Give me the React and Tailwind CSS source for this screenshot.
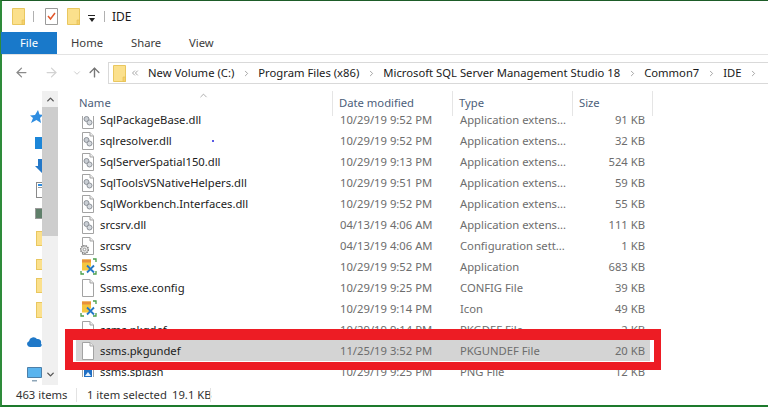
import React from 'react';
import { ArrowLeft, ArrowRight, ArrowUp, ChevronDown, ChevronRight, ChevronUp, ChevronsLeft } from 'lucide-react';

const files = [
    { name: "SqlPackageBase.dll", date: "10/29/19 9:52 PM", type: "Application extens...", size: "91 KB", icon: "dll" },
    { name: "sqlresolver.dll", date: "10/29/19 9:52 PM", type: "Application extens...", size: "32 KB", icon: "dll" },
    { name: "SqlServerSpatial150.dll", date: "10/29/19 9:13 PM", type: "Application extens...", size: "524 KB", icon: "dll" },
    { name: "SqlToolsVSNativeHelpers.dll", date: "10/29/19 9:51 PM", type: "Application extens...", size: "59 KB", icon: "dll" },
    { name: "SqlWorkbench.Interfaces.dll", date: "10/29/19 9:52 PM", type: "Application extens...", size: "55 KB", icon: "dll" },
    { name: "srcsrv.dll", date: "04/13/19 4:06 AM", type: "Application extens...", size: "111 KB", icon: "dll" },
    { name: "srcsrv", date: "04/13/19 4:06 AM", type: "Configuration sett...", size: "1 KB", icon: "config" },
    { name: "Ssms", date: "10/29/19 9:52 PM", type: "Application", size: "683 KB", icon: "app" },
    { name: "Ssms.exe.config", date: "10/29/19 9:25 PM", type: "CONFIG File", size: "39 KB", icon: "page" },
    { name: "ssms", date: "10/29/19 9:14 PM", type: "Icon", size: "49 KB", icon: "app" },
    { name: "ssms.pkgdef", date: "10/29/19 9:14 PM", type: "PKGDEF File", size: "2 KB", icon: "page" },
    { name: "ssms.pkgundef", date: "11/25/19 3:52 PM", type: "PKGUNDEF File", size: "20 KB", icon: "page", selected: true },
    { name: "ssms.splash", date: "10/29/19 9:25 PM", type: "PNG File", size: "12 KB", icon: "png" },
];

function Folder({ className }) {
    return (
        <svg className={className} viewBox="0 0 13 17">
            <path d="M.5.5h12v16H.5z" fill="#fbe08c" stroke="#e9c75f" />
            <path d="M10 12h2.500v4.500H10z" fill="#f6d16b" stroke="#e3bd52" strokeWidth=".6" />
        </svg>
    );
}

function Page({ children }) {
    return (
        <svg width="16" height="18" viewBox="0 0 16 18" className="shrink-0">
            <path d="M2.500.5h7.500l3.500 3.500v13.500h-11z" fill="#fff" stroke="#a3a3a3" />
            <path d="M10 .5v3.500h3.500" fill="#eee" stroke="#a3a3a3" />
            {children}
        </svg>
    );
}

function FileIcon({ kind }) {
    if (kind === "dll") {
        return (
            <Page>
                <circle cx="6.500" cy="8" r="2.500" fill="#c9ced4" stroke="#8d9299" />
                <circle cx="9.500" cy="11.500" r="2.500" fill="#d5d9de" stroke="#8d9299" />
            </Page>
        );
    }
    if (kind === "config") {
        return (
            <Page>
                <circle cx="4.500" cy="12.500" r="3.800" fill="#e5e5e5" stroke="#7d7d7d" strokeWidth="1.500" strokeDasharray="1.500 .8" />
                <circle cx="4.500" cy="12.500" r="1.300" fill="#fff" stroke="#7d7d7d" strokeWidth=".7" />
            </Page>
        );
    }
    if (kind === "app") {
        return (
            <svg width="17" height="17" viewBox="0 0 17 17" className="shrink-0">
                <path d="M2 1.500h9v6l-2 5H2z" fill="#f5c63f" />
                <path d="M2 1.500h9v3H2z" fill="#e8913a" />
                <path d="M13 1h3v3M1 13v3h3M13 16h3v-3" fill="none" stroke="#4a9e4a" strokeWidth="1.300" />
                <path d="M7 7.500l7 7M14 7.500l-7 7" stroke="#2478c8" strokeWidth="1.800" />
            </svg>
        );
    }
    if (kind === "png") {
        return (
            <Page>
                <path d="M4 6h8v8H4z" fill="#1f6fc4" />
                <path d="M5 13l3-4 3 4z" fill="#e6f1fb" />
            </Page>
        );
    }
    return <Page />;
}

function ColumnHeader({ width, children }) {
    return (
        <div style={{ width }} className="shrink-0 h-[25px] pl-[6px] border-r border-[#e5e5e5] text-[#4c607a] leading-[24px]">
            {children}
        </div>
    );
}

function FileRow({ file }) {
    return (
        <div className={`flex items-center h-[21px] ml-[18px] w-[574px] ${file.selected ? "bg-[#d4d4d4]" : ""}`}>
            <div className="w-[260px] shrink-0 flex items-center gap-[4px] pl-[4px] text-[#1c1c1c]">
                <div className="w-[16px] shrink-0 flex justify-center">
                    <FileIcon kind={file.icon} />
                </div>
                <span>{file.name}</span>
            </div>
            <div className="w-[120px] shrink-0 pl-[4px] text-[#6d6d6d]">{file.date}</div>
            <div className="w-[120px] shrink-0 pl-[4px] text-[#6d6d6d]">{file.type}</div>
            <div className="w-[69px] shrink-0 text-right text-[#6d6d6d]">{file.size}</div>
        </div>
    );
}

function NavFolder({ className }) {
    return <div className={`w-[6px] shrink-0 bg-[#fbe08c] border border-r-0 border-[#e9c75f] ${className}`} />;
}

function NavPane() {
    return (
        <div className="w-[40px] h-full shrink-0 overflow-hidden flex flex-col items-end">
            <svg className="mt-[19px] shrink-0 -mr-[1px]" width="13" height="14" viewBox="0 0 13 14">
                <path d="M8 0l1.500 4.500 3.500.5-3 3 1 5-4.500-3L1 13l2-5L0 5.500l5-.5z" fill="#2f8de0" />
            </svg>
            <div className="mt-[13px] w-[7px] h-[12px] shrink-0 bg-[#1c86d8]" />
            <svg className="mt-[10px] shrink-0" width="7" height="14" viewBox="0 0 7 14">
                <path d="M3 0h4v14L0 7h3z" fill="#2478c8" />
            </svg>
            <div className="mt-[9px] w-[6px] h-[16px] shrink-0 bg-white border border-r-0 border-[#8a8a8a] flex flex-col gap-px pt-px pl-px">
                <div className="h-[2px] bg-[#2f8de0]" />
                <div className="h-px bg-[#999]" />
            </div>
            <div className="mt-[10px] w-[7px] h-[11px] shrink-0 bg-[#5f7f6a] border border-r-0 border-[#9a9a9a]" />
            <NavFolder className="mt-[12px] h-[15px]" />
            <NavFolder className="mt-[13px] h-[11px]" />
            <NavFolder className="mt-[8px] h-[15px]" />
            <NavFolder className="mt-[9px] h-[16px]" />
            <svg className="mt-[18px] shrink-0" width="15" height="11" viewBox="0 0 15 11">
                <path d="M3 11a3 3 0 0 1-1-5.800A4.500 4.500 0 0 1 10 3a3.500 3.500 0 0 1 4 4.500 2 2 0 0 1-1 3.500z" fill="#1f78c8" />
            </svg>
            <svg className="mt-[20px] shrink-0" width="15" height="15" viewBox="0 0 15 15">
                <path d="M.5.500h14v10H.5z" fill="#5ab4ee" stroke="#4d7fa8" />
                <path d="M5 13h5v1.500H5z" fill="#8fa6b8" />
            </svg>
        </div>
    );
}

function Crumb({ children }) {
    return (
        <div className="flex items-center shrink-0">
            <span>{children}</span>
            <ChevronRight size={9} strokeWidth={2} className="shrink-0 mx-[7.500px] text-[#8a8a8a]" />
        </div>
    );
}

function App() {
    return (
        <div className="relative w-[768px] h-[408px] overflow-hidden bg-white pb-px text-[11.25px] leading-none text-[#1a1a1a] font-['Noto_Sans',sans-serif]">
            <div className="h-full flex flex-col border-l-2 border-t border-b-2 border-l-[#2e8b3a] border-t-[#1d5c28] border-b-[#1d7a2c]">
                {/* title bar */}
                <div className="h-[31px] shrink-0 flex items-center pl-[10px]">
                    <Folder className="w-[13px] h-[17px]" />
                    <div className="w-px h-[11px] bg-[#b0b0b0] ml-[8px]" />
                    <svg className="ml-[11px]" width="13" height="17" viewBox="0 0 13 17">
                        <path d="M.5.500h12v16H.5z" fill="#fff" stroke="#9a9a9a" />
                        <path d="M3 8l2.500 3L10 5" fill="none" stroke="#e2572b" strokeWidth="1.500" />
                    </svg>
                    <Folder className="ml-[9px] w-[13px] h-[17px]" />
                    <div className="ml-[8px] flex flex-col items-center gap-[2px] mt-[3px]">
                        <div className="w-[7px] h-px bg-[#222]" />
                        <div className="w-0 h-0 border-x-[3.500px] border-x-transparent border-t-[4px] border-t-[#222]" />
                    </div>
                    <div className="w-px h-[11px] bg-[#b0b0b0] ml-[9px]" />
                    <span className="ml-[7px] text-[12px]">IDE</span>
                </div>
                {/* ribbon tabs */}
                <div className="h-[23px] shrink-0 flex border-b border-[#e3e3e3] text-[#3b3b3b]">
                    <div className="w-[56px] -ml-px bg-[#1979ca] text-white flex items-center justify-center">File</div>
                    <div className="ml-[14px] w-[30px] flex items-center">Home</div>
                    <div className="ml-[30px] w-[29px] flex items-center">Share</div>
                    <div className="ml-[29px] flex items-center">View</div>
                </div>
                {/* nav + address */}
                <div className="h-[36px] shrink-0 flex items-start pt-[7px]">
                    <div className="w-[106px] shrink-0 h-[21px] flex items-center text-[#8a8a8a]">
                        <ArrowLeft size={15} strokeWidth={2} className="ml-[12px]" />
                        <ArrowRight size={15} strokeWidth={2} className="ml-[15px] text-[#d2d2d2]" />
                        <ChevronDown size={10} strokeWidth={2} className="ml-[13px] text-[#c4c4c4]" />
                        <ArrowUp size={15} strokeWidth={2.200} className="ml-[5px] text-[#777]" />
                    </div>
                    <div className="flex-1 h-[22px] border border-r-0 border-[#d9d9d9] flex items-center pl-[4px]">
                        <Folder className="w-[13px] h-[17px] shrink-0" />
                        <ChevronsLeft size={10} strokeWidth={1.600} className="shrink-0 ml-[4px] mr-[8px] text-[#777]" />
                        <Crumb>New Volume (C:)</Crumb>
                        <Crumb>Program Files (x86)</Crumb>
                        <Crumb>Microsoft SQL Server Management Studio 18</Crumb>
                        <Crumb>Common7</Crumb>
                        <Crumb>IDE</Crumb>
                    </div>
                </div>
                {/* main area */}
                <div className="flex-1 min-h-0 flex">
                    <NavPane />
                    <div className="w-[16px] shrink-0 bg-[#f0f0f0] flex flex-col items-center">
                        <ChevronUp size={11} strokeWidth={3} className="mt-[3px] h-[11px] text-[#555]" />
                        <div className="mt-[2px] w-full h-[129px] bg-[#cdcdcd]" />
                        <ChevronDown size={11} strokeWidth={3} className="mt-auto mb-[5px] text-[#555]" />
                    </div>
                    <div className="flex-1 min-w-0 relative flex flex-col">
                        <ChevronUp size={11} strokeWidth={1.300} className="absolute left-[140px] -top-[1px] text-[#777]" />
                        <div className="flex shrink-0 pl-[15px] h-[25px]">
                            <ColumnHeader width="260px">Name</ColumnHeader>
                            <ColumnHeader width="120px">Date modified</ColumnHeader>
                            <ColumnHeader width="120px">Type</ColumnHeader>
                            <ColumnHeader width="80px">Size</ColumnHeader>
                        </div>
                        <div className="flex-1 min-h-0 overflow-hidden mb-[8px]">
                            <div className="-mt-[7px]">
                                {files.map((file) => (
                                    <FileRow key={file.name} file={file} />
                                ))}
                            </div>
                        </div>
                        <div className="absolute left-[154px] top-[49px] w-[2px] h-[2px] rounded-full bg-[#2222dd]" />
                        <div className="absolute left-[7px] top-[238px] w-[596px] h-[41px] border-[8px] border-[#ed1c24] border-t-[11px] border-r-[7px]" />
                    </div>
                </div>
                {/* status bar */}
                <div className="h-[20px] shrink-0 flex items-center pl-[14px] text-[#333] whitespace-nowrap">
                    <span className="w-[50px]">463 items</span>
                    <div className="w-px h-[14px] bg-[#e3e3e3] ml-[10px] mr-[10px]" />
                    <span className="w-[79px]">1 item selected</span>
                    <span className="ml-[6px] w-[38px]">19.1 KB</span>
                    <div className="w-px h-[14px] bg-[#e3e3e3]" />
                </div>
            </div>
        </div>
    );
}

export default App;
